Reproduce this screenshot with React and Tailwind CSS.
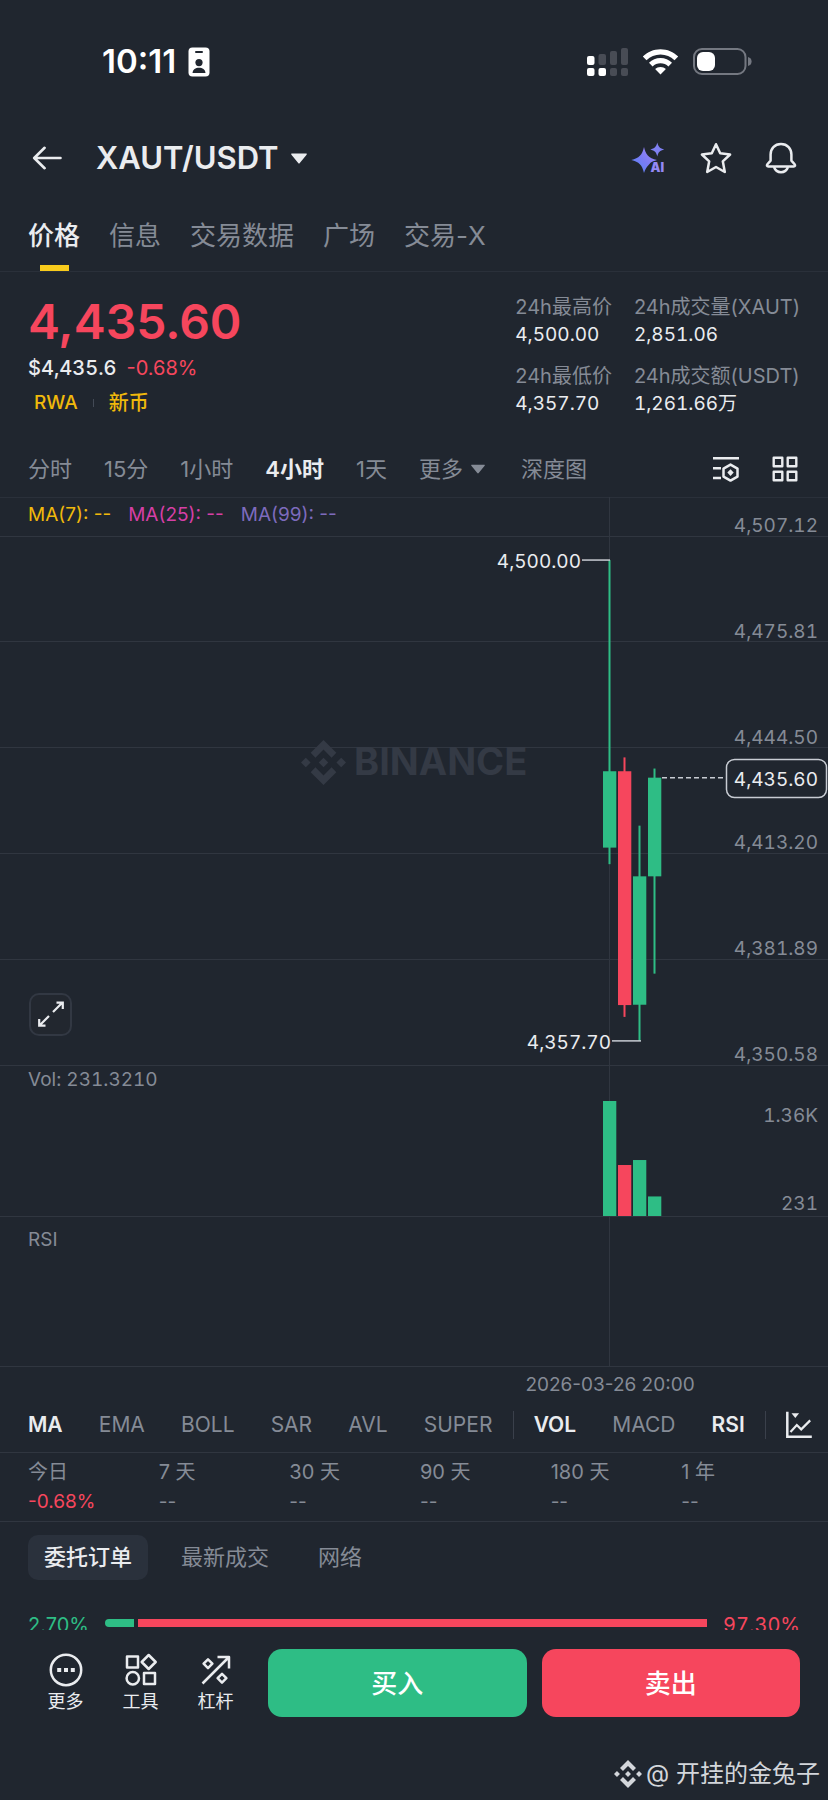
import React, { useState } from 'react';

const UP = '#2ebd85';
const DOWN = '#f6465d';
const FONT = "font-[Inter,'Noto_Sans_CJK_SC',sans-serif]";

const tabs = ['价格', '信息', '交易数据', '广场', '交易-X'];
const intervals = ['分时', '15分', '1小时', '4小时', '1天'];

const stats = [
  { label: '24h最高价', value: '4,500.00' },
  { label: '24h成交量(XAUT)', value: '2,851.06' },
  { label: '24h最低价', value: '4,357.70' },
  { label: '24h成交额(USDT)', value: '1,261.66万' },
];

const candles = [
  { open: 4414.9, high: 4500, low: 4410, close: 4437.5, vol: 1360 },
  { open: 4437.5, high: 4441.6, low: 4364.8, close: 4368.3, vol: 603 },
  { open: 4368.4, high: 4421.4, low: 4357.7, close: 4406.4, vol: 662 },
  { open: 4406.4, high: 4438.3, low: 4377.6, close: 4435.6, vol: 231.321 },
];

const priceTicks = ['4,507.12', '4,475.81', '4,444.50', '4,413.20', '4,381.89', '4,350.58'];

const performance = [
  { period: '今日', value: '-0.68%' },
  { period: '7 天', value: '--' },
  { period: '30 天', value: '--' },
  { period: '90 天', value: '--' },
  { period: '180 天', value: '--' },
  { period: '1 年', value: '--' },
];

/* ---------- icons ---------- */

const BadgeIcon = () => (
  <svg viewBox="0 0 22 30" className="w-[22px] h-[30px]" aria-hidden="true">
    <rect x="0.5" y="0.5" width="21" height="29" rx="4" fill="#fff" />
    <rect x="7" y="4" width="8" height="2" rx="1" fill="#20262f" />
    <circle cx="11" cy="15.6" r="3.6" fill="#20262f" />
    <path d="M4.5 26c.4-3.6 3-5.2 6.5-5.2s6.100 1.600 6.500 5.200z" fill="#20262f" />
  </svg>
);

const SignalIcon = () => (
  <svg viewBox="0 0 42 30" className="w-[42px] h-[30px]" aria-hidden="true">
    <g fill="#484c55">
      <rect x="12.500" y="7" width="7.500" height="11" rx="2" />
      <rect x="24" y="4" width="7" height="14" rx="2" />
      <rect x="35" y="1" width="7" height="17" rx="2" />
      <rect x="24" y="21" width="7" height="8" rx="2" />
      <rect x="35" y="21" width="7" height="8" rx="2" />
    </g>
    <g fill="#fff">
      <rect x="1" y="9" width="7.500" height="9" rx="2" />
      <rect x="1" y="21" width="7.500" height="8" rx="2" />
      <rect x="12.500" y="21" width="7.500" height="8" rx="2" />
    </g>
  </svg>
);

const WifiIcon = () => (
  <svg viewBox="0 0 37 28" className="w-[37px] h-[28px]" aria-hidden="true">
    <path d="M.8 8.600C5.500 4 11.600 1.300 18.500 1.300S31.500 4 36.200 8.600l-3.700 3.700C28.700 8.700 23.900 6.600 18.500 6.600S8.300 8.700 4.500 12.300z" fill="#fff" />
    <path d="M7 14.800c3.100-2.900 7.100-4.700 11.500-4.700s8.400 1.800 11.500 4.700l-3.600 3.600c-2.100-2-4.900-3.200-7.900-3.200s-5.800 1.200-7.900 3.200z" fill="#fff" />
    <path d="M13.100 21.100c1.400-1.300 3.300-2.100 5.400-2.100s4 .8 5.400 2.100l-5.400 5.500z" fill="#fff" />
  </svg>
);

const BatteryIcon = () => (
  <svg viewBox="0 0 59 28" className="w-[59px] h-[28px]" aria-hidden="true">
    <rect x="1" y="1" width="51.500" height="25" rx="8" fill="none" stroke="#747881" strokeWidth="2" />
    <rect x="4" y="4" width="18" height="19" rx="6" fill="#fff" />
    <path d="M55 9c2.400.6 3.600 2.200 3.600 4.500S57.400 17.400 55 18z" fill="#747881" />
  </svg>
);

const BackIcon = () => (
  <svg viewBox="0 0 30 24" className="w-[30px] h-[24px]" fill="none" stroke="currentColor" strokeWidth="2.600" aria-hidden="true">
    <path d="M28.500 12H2.500M12.600 1.800 2.200 12l10.400 10.200" strokeLinejoin="round" strokeLinecap="round" />
  </svg>
);

const AiIcon = () => (
  <svg viewBox="0 0 36 32" className="w-[36px] h-[32px]" aria-hidden="true">
    <defs>
      <linearGradient id="ai" x1="0" y1="1" x2="1" y2="0">
        <stop offset="0" stopColor="#4f86f7" />
        <stop offset="0.500" stopColor="#7b7bf5" />
        <stop offset="1" stopColor="#a88bf8" />
      </linearGradient>
    </defs>
    <path d="M13 5c1.600 7.400 4.300 11 13 13-3 .9-5 1.600-6.500 2.700L17.600 23c-1.900 1.700-3.300 4-4.600 8C11.200 23 8 19.800.3 18 8 16.200 11.200 13 13 5z" fill="url(#ai)" />
    <path d="M26.300.6c1 4.300 2.600 6 6.900 7-4.300 1-5.900 2.600-6.900 6.900-1-4.300-2.700-5.900-7-6.900 4.300-1 6-2.700 7-7z" fill="#7f80f3" />
    <text x="19.500" y="30" fontSize="12.500" fontWeight="900" fontFamily="Inter, sans-serif" fill="#9488f5">AI</text>
  </svg>
);

const StarIcon = () => (
  <svg viewBox="0 0 32 32" className="w-8 h-8" fill="none" stroke="currentColor" strokeWidth="2.500" aria-hidden="true">
    <path d="m16 2.200 4.200 9 9.900 1.300-7.300 6.800 2 10.700L16 25l-8.800 5 2-10.700-7.300-6.800 9.900-1.300z" strokeLinejoin="round" />
  </svg>
);

const BellIcon = () => (
  <svg viewBox="0 0 32 32" className="w-8 h-8" fill="none" stroke="currentColor" strokeWidth="2.500" aria-hidden="true">
    <path d="M16 2c-6.400 0-10.400 4.600-10.400 10.400v6.200L2.400 22.300c-.9 1.200-.5 2.200.9 2.200h25.400c1.400 0 1.800-1 .9-2.200l-3.200-3.700v-6.200C26.400 6.600 22.400 2 16 2z" strokeLinejoin="round" />
    <path d="M9 25c1.200 3.400 3.700 5.200 7 5.200s5.800-1.800 7-5.200" />
  </svg>
);

const CaretIcon = ({ className }) => (
  <svg viewBox="0 0 16 11" className={className} aria-hidden="true">
    <path d="M1 .5h14c.8 0 1 .6.600 1.200L8.800 10c-.5.700-1.100.7-1.600 0L.4 1.700C0 1.100.2.5 1 .5z" fill="currentColor" />
  </svg>
);

const ChartSettingsIcon = () => (
  <svg viewBox="0 0 28 26" className="w-7 h-[26px]" fill="none" stroke="currentColor" strokeWidth="2.500" aria-hidden="true">
    <path d="M1 2.200h26M1 12.300h8M1 22h8" />
    <path d="m18.500 8.600 7 4v8l-7 4-7-4v-8z" strokeLinejoin="round" />
    <path d="m18.500 13.300 3.200 3.300-3.200 3.300-3.200-3.300z" fill="currentColor" stroke="none" />
  </svg>
);

const GridIcon = () => (
  <svg viewBox="0 0 26 26" className="w-[26px] h-[26px]" fill="none" stroke="currentColor" strokeWidth="2.400" strokeLinejoin="round" aria-hidden="true">
    <rect x="1.700" y="1.700" width="8.600" height="8.600" />
    <rect x="15.700" y="1.700" width="8.600" height="8.600" />
    <rect x="1.700" y="15.700" width="8.600" height="8.600" />
    <rect x="15.700" y="15.700" width="8.600" height="8.600" />
  </svg>
);

const ExpandIcon = () => (
  <svg viewBox="0 0 26 26" className="w-[26px] h-[26px]" fill="none" stroke="currentColor" strokeWidth="2.200" aria-hidden="true">
    <path d="M15 11 24.500 1.500M18.500 1.600h6.300V8M11 15l-9.500 9.500M7.500 24.600H1.200V18" />
  </svg>
);

const LineChartIcon = () => (
  <svg viewBox="0 0 26 28" className="w-[26px] h-7 shrink-0" fill="none" stroke="currentColor" aria-hidden="true">
    <path d="M1.300.8v25h24.500" strokeWidth="2.500" />
    <path d="m4.500 21 6.300-7 4.400 4.400 9-9" strokeWidth="2.200" />
    <path d="M5.500 2.200h7.600L9.300 7z" fill="currentColor" stroke="none" />
  </svg>
);

const MoreIcon = () => (
  <svg viewBox="0 0 34 34" className="w-[34px] h-[34px]" aria-hidden="true">
    <circle cx="17" cy="17" r="15.200" fill="none" stroke="currentColor" strokeWidth="2.500" />
    <path d="M8.200 15h4v4h-4zM15 15h4v4h-4zM21.800 15h4v4h-4z" fill="currentColor" />
  </svg>
);

const ToolsIcon = () => (
  <svg viewBox="0 0 34 34" className="w-[34px] h-[34px]" fill="none" stroke="currentColor" strokeWidth="2.500" strokeLinejoin="round" aria-hidden="true">
    <rect x="3" y="3.500" width="11" height="11" />
    <path d="m24.700 2 7 7-7 7-7-7z" />
    <circle cx="8.800" cy="25.300" r="6.200" />
    <rect x="20" y="20" width="11" height="11" />
  </svg>
);

const LeverageIcon = () => (
  <svg viewBox="0 0 34 34" className="w-[34px] h-[34px]" fill="none" stroke="currentColor" strokeWidth="2.500" strokeLinejoin="round" aria-hidden="true">
    <path d="M3.500 30.500 30 4M18.500 4H30v11.500" />
    <path d="m9 6.300 4.400 4.400L9 15.100l-4.400-4.400zM23 20.800l4.400 4.400-4.400 4.400-4.400-4.400z" />
  </svg>
);

const BinanceMark = ({ className, ...rest }) => (
  <svg viewBox="0 0 48 48" className={className} fill="currentColor" aria-hidden="true" {...rest}>
    <path d="M24 0 37.700 13.700l-5.100 5.100L24 10.200l-8.600 8.600-5.100-5.100z" />
    <path d="M24 48 10.300 34.300l5.100-5.100 8.600 8.600 8.600-8.600 5.100 5.100z" />
    <path d="M5.100 18.900 10.200 24l-5.100 5.100L0 24zM42.900 18.900 48 24l-5.100 5.100-5.100-5.100zM24 18.900l5.100 5.100-5.100 5.100-5.100-5.100z" />
  </svg>
);

/* ---------- chart ---------- */

const TOP = 39;
const STEP = 105.8;
const VOL_BASE = 719;
const RSI_BASE = 869;
const priceY = (p) => TOP + (4507.12 - p) * 3.379;
const candleX = (i) => 603 + i * 15;

const Chart = () => {
  const last = priceY(4435.6);
  return (
    <svg viewBox="0 0 828 901" className="w-full h-auto" fontFamily="Inter, sans-serif" fontSize="19" role="img" aria-label="XAUT/USDT">
      <g stroke="#303640" strokeWidth="1" shapeRendering="crispEdges">
        {priceTicks.map((t, i) => (
          <line key={t} x1="0" x2="828" y1={TOP + i * STEP} y2={TOP + i * STEP} />
        ))}
        <line x1="0" x2="828" y1={VOL_BASE} y2={VOL_BASE} />
        <line x1="0" x2="828" y1={RSI_BASE} y2={RSI_BASE} />
        <line x1="609" x2="609" y1="0" y2={RSI_BASE} />
      </g>

      <BinanceMark x="301" y="243" width="45" height="45" color="#343a45" />
      <text x="354" y="278" fontSize="38" fontWeight="700" fill="#343a45">BINANCE</text>

      {candles.map((c, i) => {
        const color = c.close >= c.open ? UP : DOWN;
        const x = candleX(i);
        const bodyTop = priceY(Math.max(c.open, c.close));
        const volH = (c.vol / 1360) * 115;
        return (
          <g key={c.open} fill={color}>
            <rect x={x + 5.500} y={priceY(c.high)} width="2" height={priceY(c.low) - priceY(c.high)} />
            <rect x={x} y={bodyTop} width="13.300" height={priceY(Math.min(c.open, c.close)) - bodyTop} />
            <rect x={x} y={VOL_BASE - volH} width="13.300" height={volH} />
          </g>
        );
      })}

      <g className="tabular-nums" fill="#858b96" textAnchor="end">
        {priceTicks.map((t, i) => (
          <text key={t} x="818" y={TOP + i * STEP - 4}>{t}</text>
        ))}
        <text x="818" y="625">1.36K</text>
        <text x="818" y="713">231</text>
      </g>

      {/* high / low callouts */}
      <g stroke="#c8ccd3" strokeWidth="1.500">
        <path d={`M582 ${priceY(4500)}H610`} />
        <path d={`M612 ${priceY(4357.7)}H641`} />
        <path d={`M662 ${last}H726`} strokeDasharray="5 3" />
      </g>
      <g className="tabular-nums" fill="#eaecef" textAnchor="end">
        <text x="581" y="71">4,500.00</text>
        <text x="611" y="552">4,357.70</text>
      </g>

      <rect x="726.500" y="262.500" width="100" height="38" rx="8" fill="#20262f" stroke="#c8ccd3" strokeWidth="1.500" />
      <text className="tabular-nums" x="818" y="289" textAnchor="end" fill="#eaecef">4,435.60</text>

      <g fill="#858b96">
        <text className="tabular-nums" x="28" y="589">Vol: 231.3210</text>
        <text x="28" y="749">RSI</text>
        <text x="610" y="894" textAnchor="middle">2026-03-26 20:00</text>
      </g>
    </svg>
  );
};

/* ---------- page ---------- */

const Indicator = ({ name, on, onToggle }) => (
  <button onClick={() => onToggle(name)} className={on ? 'font-semibold text-[#eaecef]' : 'text-[#858b96]'}>
    {name}
  </button>
);

const FooterAction = ({ icon, label }) => (
  <button className="w-[75px] flex flex-col items-center text-[18px] leading-[30px]">
    {icon}
    {label}
  </button>
);

const App = () => {
  const [tab, setTab] = useState('价格');
  const [interval, setInterval] = useState('4小时');
  const [book, setBook] = useState('委托订单');
  const [indicators, setIndicators] = useState(['MA', 'VOL', 'RSI']);

  const toggle = (name) =>
    setIndicators((list) => (list.includes(name) ? list.filter((n) => n !== name) : [...list, name]));

  return (
    <div className={`min-h-screen bg-[#20262f] text-[#eaecef] flex flex-col ${FONT}`}>
      {/* Status bar */}
      <div className="h-[124px] pl-[102px] pr-[76px] flex items-center justify-between text-white">
        <div className="flex items-center gap-3">
          <span className="text-[33px] font-semibold">10:11</span>
          <BadgeIcon />
        </div>
        <div className="flex items-center gap-[14px]">
          <SignalIcon />
          <WifiIcon />
          <BatteryIcon />
        </div>
      </div>

      <header className="h-[68px] pl-8 pr-[31px] flex items-center justify-between">
        <div className="flex items-center gap-[34px]">
          <button aria-label="返回"><BackIcon /></button>
          <button className="flex items-center gap-3">
            <h1 className="text-[31px] font-semibold">XAUT/USDT</h1>
            <CaretIcon className="w-4 h-[11px]" />
          </button>
        </div>
        <div className="flex items-center gap-[33px]">
          <button aria-label="AI"><AiIcon /></button>
          <button aria-label="收藏"><StarIcon /></button>
          <button aria-label="提醒"><BellIcon /></button>
        </div>
      </header>

      <nav className="px-7 pt-[26px] flex gap-[29px] border-b border-[#2a303a]">
        {tabs.map((t) => (
          <button
            key={t}
            onClick={() => setTab(t)}
            className={`flex flex-col items-center gap-[11px] text-[26px] leading-9 ${
              t === tab ? 'font-medium text-[#eaecef]' : 'text-[#858b96]'
            }`}
          >
            {t}
            <span className={`w-[29px] h-1.5 ${t === tab ? 'bg-[#f8cb1c]' : ''}`} />
          </button>
        ))}
      </nav>

      {/* Price summary */}
      <section className="px-7 pt-[22px] flex justify-between">
        <div>
          <p className="text-[48px] leading-14 font-semibold text-[#f6465d]">4,435.60</p>
          <p className="mt-1 flex gap-2.5 text-[20px] leading-7">
            <span className="font-medium tabular-nums">$4,435.6</span>
            <span className="text-[#f6465d]">-0.68%</span>
          </p>
          <div className="mt-[7px] pl-1.5 flex items-center gap-[15px] text-[19px] leading-7 font-medium text-[#f0b90b]">
            <a href="#rwa">RWA</a>
            <span className="w-px h-2 bg-[#434a56]" />
            <a href="#new" className="text-[20px]">新币</a>
          </div>
        </div>
        <dl className="grid grid-cols-[auto_auto] gap-x-[22px] gap-y-[15px] content-start leading-[27px]">
          {stats.map((s) => (
            <div key={s.label}>
              <dt className="text-[20px] text-[#858b96]">{s.label}</dt>
              <dd className="text-[19px] tabular-nums">{s.value}</dd>
            </div>
          ))}
        </dl>
      </section>

      <div className="mt-6 h-[57px] pl-7 pr-[30px] flex items-center justify-between border-b border-[#2a303a] text-[22px] text-[#858b96]">
        <div className="flex items-center gap-8">
          {intervals.map((i) => (
            <button key={i} onClick={() => setInterval(i)} className={i === interval ? 'font-semibold text-[#eaecef]' : ''}>
              {i}
            </button>
          ))}
          <button className="flex items-center gap-2">
            更多
            <CaretIcon className="w-3.5 h-2.5" />
          </button>
          <button className="ml-1">深度图</button>
        </div>
        <div className="flex items-center gap-8 text-[#eaecef]">
          <button aria-label="图表设置"><ChartSettingsIcon /></button>
          <button aria-label="布局"><GridIcon /></button>
        </div>
      </div>

      <div className="relative -mt-px">
        <Chart />
        <div className="absolute top-1 left-7 flex gap-[17px] text-[19px] leading-7">
          <span className="text-[#f0b90b]">MA(7): --</span>
          <span className="text-[#d63fa6]">MA(25): --</span>
          <span className="text-[#7d6bbd]">MA(99): --</span>
        </div>
        <button
          aria-label="全屏"
          className="absolute left-[29px] top-[55%] size-[43px] rounded-[10px] border-2 border-[#323843] bg-[#22272f] flex items-center justify-center"
        >
          <ExpandIcon />
        </button>
      </div>

      <div className="h-[55px] pl-7 pr-4 flex items-center justify-between border-b border-[#303640] text-[21px]">
        {['MA', 'EMA', 'BOLL', 'SAR', 'AVL', 'SUPER'].map((n) => (
          <Indicator key={n} name={n} on={indicators.includes(n)} onToggle={toggle} />
        ))}
        <span className="w-px h-7 -mx-4 bg-[#3a404b]" />
        {['VOL', 'MACD', 'RSI'].map((n) => (
          <Indicator key={n} name={n} on={indicators.includes(n)} onToggle={toggle} />
        ))}
        <span className="w-px h-7 -mx-4 bg-[#3a404b]" />
        <button aria-label="指标"><LineChartIcon /></button>
      </div>

      <div className="pl-7 pr-4 py-1 border-b border-[#303640]">
        <table className="w-full table-fixed text-left text-[19px] leading-[30px] text-[#858b96]">
          <thead>
            <tr>
              {performance.map((p) => (
                <th key={p.period} className="p-0 text-[20px] leading-[30px] font-normal">{p.period}</th>
              ))}
            </tr>
          </thead>
          <tbody>
            <tr>
              {performance.map((p) => (
                <td key={p.period} className={p.value === '--' ? 'p-0' : 'p-0 text-[#f6465d]'}>{p.value}</td>
              ))}
            </tr>
          </tbody>
        </table>
      </div>

      <div className="px-7 pt-[13px] flex gap-[17px] text-[22px]">
        {['委托订单', '最新成交', '网络'].map((b) => (
          <button
            key={b}
            onClick={() => setBook(b)}
            className={`h-[45px] px-4 rounded-[10px] ${
              b === book ? 'bg-[#2a313c] font-medium text-[#eaecef]' : 'text-[#858b96]'
            }`}
          >
            {b}
          </button>
        ))}
      </div>

      {/* Bid / ask ratio, cut off by the action bar */}
      <div className="mt-8 h-[18px] px-7 overflow-hidden">
        <div className="h-[26px] flex items-center gap-4 text-[20px]">
          <span className="text-[#2ebd85]">2.70%</span>
          <div className="flex-1 h-2 mb-1 flex gap-1">
            <span className="w-[29px] rounded-l-full bg-[#2ebd85]" />
            <span className="flex-1 bg-[#f6465d]" />
          </div>
          <span className="text-[#f6465d] tabular-nums">97.30%</span>
        </div>
      </div>

      <footer className="px-7 pt-[19px] flex items-start gap-[15px]">
        <div className="flex pt-1">
          <FooterAction icon={<MoreIcon />} label="更多" />
          <FooterAction icon={<ToolsIcon />} label="工具" />
          <FooterAction icon={<LeverageIcon />} label="杠杆" />
        </div>
        <button className="flex-1 h-[68px] rounded-[14px] bg-[#2ebd85] text-[26px] font-medium text-white">买入</button>
        <button className="flex-1 h-[68px] rounded-[14px] bg-[#f6465d] text-[26px] font-medium text-white">卖出</button>
      </footer>

      <div className="mt-auto pr-2 pb-2 flex items-center justify-end gap-1 text-[24px] leading-9 text-[#d3d6db]">
        <BinanceMark className="w-7 h-7" />
        <span>@ 开挂的金兔子</span>
      </div>
    </div>
  );
};

export default App;
